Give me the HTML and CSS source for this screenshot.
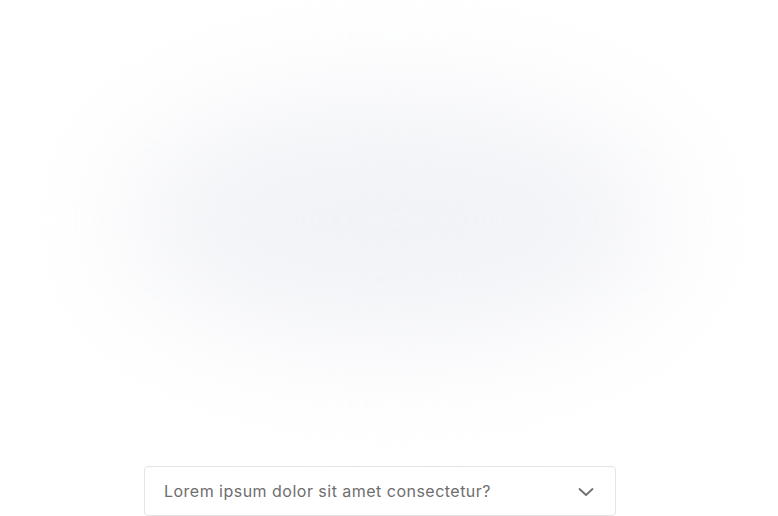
FILE: index.html
```
<!DOCTYPE html>
<html>
<head>
<meta charset="utf-8">
<link rel="stylesheet" href="styles.css">
</head>
<body>
<div class="page">
  <div class="glow-area">
    <div class="glow"></div>
  </div>
  <div class="faq">
    <div class="faq-item">
      <span class="faq-q">Lorem ipsum dolor sit amet consectetur?</span>
      <svg class="chev" width="16" height="10" viewBox="0 0 16 10" fill="none"><path d="M1.5 2 L8 8 L14.5 2" stroke="#6f6f6f" stroke-width="1.8" stroke-linecap="round" stroke-linejoin="round"/></svg>
    </div>
  </div>
</div>
</body>
</html>
```
FILE: styles.css
```
html, body {
  margin: 0;
  padding: 0;
  background: #ffffff;
  overflow: hidden;
}
.page {
  width: 778px;
  height: 516px;
  display: flex;
  flex-direction: column;
  align-items: center;
}
.glow-area {
  height: 466px;
  width: 100%;
  display: flex;
  justify-content: center;
  align-items: flex-start;
}
.glow {
  margin-top: 95px;
  margin-left: 10px;
  width: 540px;
  height: 250px;
  border-radius: 50%;
  background: #f2f3f7;
  filter: blur(60px);
}
.faq {
  width: 472px;
  margin-right: 18px;
}
.faq-item {
  box-sizing: border-box;
  height: 50px;
  border: 1px solid #e4e4e4;
  border-radius: 4px;
  display: flex;
  align-items: center;
  justify-content: space-between;
  padding: 0 21px 0 19px;
  background: #fff;
}
.faq-q {
  font-family: "Inter", "Noto Sans", sans-serif;
  font-size: 16px;
  color: #6e6e6e;
  letter-spacing: 0.48px;
}
.chev {
  display: block;
  margin-top: 2px;
}
```
